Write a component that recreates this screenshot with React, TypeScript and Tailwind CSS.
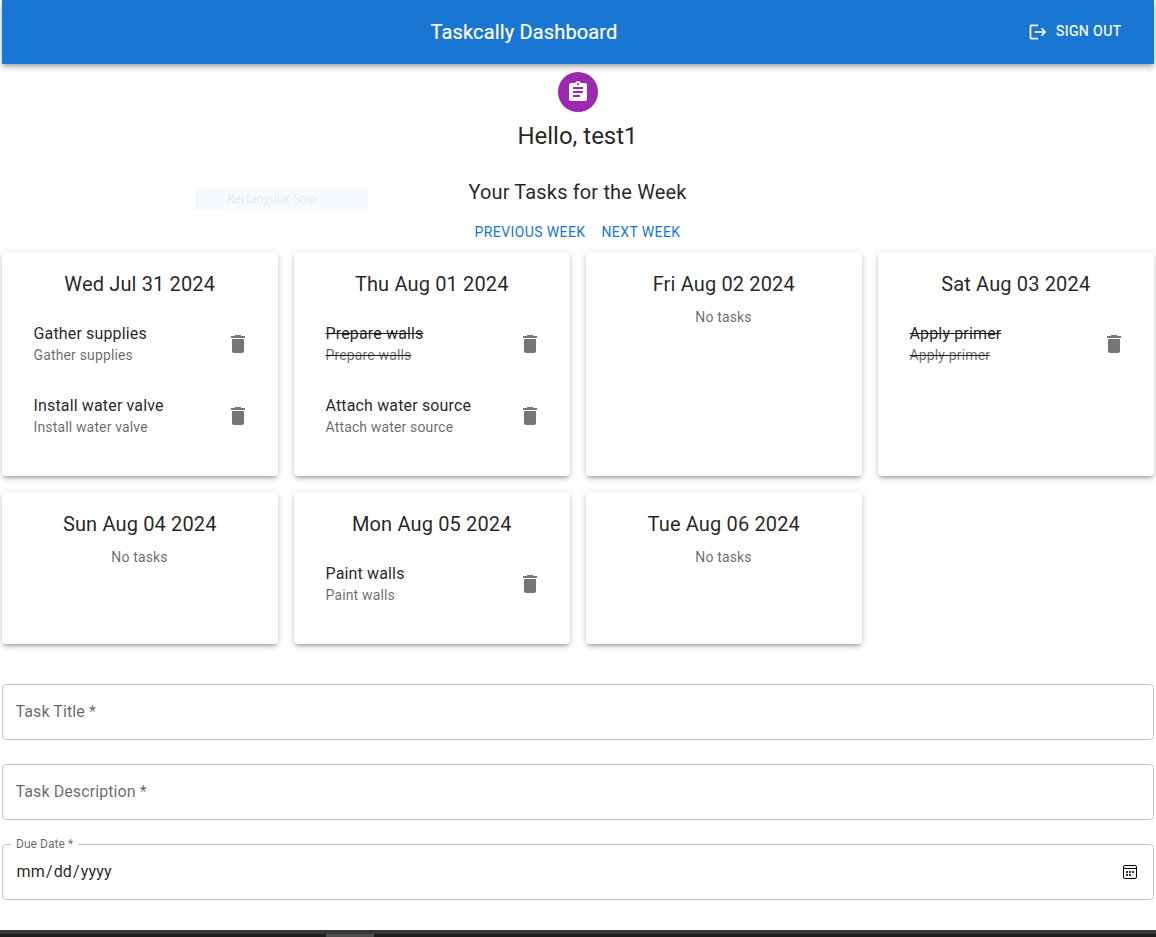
import React from "react";
import { MdAssignment, MdDelete, MdLogout } from "react-icons/md";

type Task = { title: string; description: string; done?: boolean };
type Day = { date: string; tasks: Task[] };

const week: Day[] = [
  {
    date: "Wed Jul 31 2024",
    tasks: [
      { title: "Gather supplies", description: "Gather supplies" },
      { title: "Install water valve", description: "Install water valve" },
    ],
  },
  {
    date: "Thu Aug 01 2024",
    tasks: [
      { title: "Prepare walls", description: "Prepare walls", done: true },
      { title: "Attach water source", description: "Attach water source" },
    ],
  },
  { date: "Fri Aug 02 2024", tasks: [] },
  {
    date: "Sat Aug 03 2024",
    tasks: [{ title: "Apply primer", description: "Apply primer", done: true }],
  },
  { date: "Sun Aug 04 2024", tasks: [] },
  {
    date: "Mon Aug 05 2024",
    tasks: [{ title: "Paint walls", description: "Paint walls" }],
  },
  { date: "Tue Aug 06 2024", tasks: [] },
];

function TaskRow({ task }: { task: Task }) {
  return (
    <li className="flex h-[72px] items-center justify-between pr-3 pl-[15.5px]">
      <div className={task.done ? "line-through" : ""}>
        <span className="block text-base leading-6 tracking-[0.00938em]">{task.title}</span>
        <p className="-mt-px pb-px text-sm leading-5 tracking-[0.01071em] text-black/60">{task.description}</p>
      </div>
      <button aria-label="delete" className="text-[#757575]">
        <MdDelete size={24} />
      </button>
    </li>
  );
}

function DayCard({ day }: { day: Day }) {
  return (
    <section className="rounded-[4px] bg-white p-4 shadow-[0px_3px_3px_-2px_rgba(0,0,0,0.2),0px_3px_4px_0px_rgba(0,0,0,0.14),0px_1px_8px_0px_rgba(0,0,0,0.12)]">
      <h3 className="pr-[0.5px] text-center text-xl leading-8 tracking-[0.0075em]">{day.date}</h3>
      <ul className="py-2">
        {day.tasks.length === 0 && (
          <li className="-mt-px pr-px text-center text-sm leading-5 tracking-[0.01071em] text-black/60">No tasks</li>
        )}
        {day.tasks.map((task) => (
          <TaskRow key={task.title} task={task} />
        ))}
      </ul>
    </section>
  );
}

function TextField({ label }: { label: string }) {
  return (
    <div className="flex h-14 items-center rounded-[4px] border border-[#c4c4c4] px-[12.5px] text-base tracking-[0.006em] text-black/60">
      <span>{label}</span>
    </div>
  );
}

function CalendarIcon() {
  return (
    <svg width="14" height="14" viewBox="0 0 14 14" fill="none" aria-hidden="true">
      <rect x="0.5" y="0.5" width="13" height="13" rx="1.5" stroke="#000" />
      <path d="M1 3.5h12" stroke="#000" />
      <path d="M3 6h2v2H3zM6 6h2v2H6zM9 6h2v2H9zM3 9h2v2H3zM6 9h2v2H6z" fill="#333" />
    </svg>
  );
}

export default function App() {
  return (
    <div className="relative flex h-[937px] flex-col overflow-hidden bg-white font-['Roboto',sans-serif] text-black/87">
      <div className="flex flex-1 flex-col px-0.5">
        <header className="flex h-16 shrink-0 items-center bg-[#1976d2] px-6 text-white shadow-[0px_2px_4px_-1px_rgba(0,0,0,0.2),0px_4px_5px_0px_rgba(0,0,0,0.14),0px_1px_10px_0px_rgba(0,0,0,0.12)]">
          <h1 className="flex-1 pl-0.5 text-center text-xl leading-8 tracking-[0.0075em] [-webkit-text-stroke:0.2px_white]">
            Taskcally Dashboard
          </h1>
          <button className="flex w-[110px] items-center gap-2 pl-2 text-sm leading-6 tracking-[0.02857em] whitespace-nowrap [-webkit-text-stroke:0.2px_white]">
            <MdLogout size={20} />
            <span className="-mt-0.5">SIGN OUT</span>
          </button>
        </header>

        <main className="flex flex-col pt-2">
          <div className="flex flex-col items-center">
            <div className="flex size-10 items-center justify-center rounded-full bg-[#9c27b0] text-white">
              <MdAssignment size={24} />
            </div>
            <h2 className="mt-2 pr-px text-2xl leading-8">Hello, test1</h2>
            <h2 className="mt-6 pr-px text-xl leading-8 tracking-[0.0075em]">Your Tasks for the Week</h2>
            <div className="mt-1.5 flex h-[38px] items-center gap-4 pr-px pb-0.5 text-sm tracking-[0.02857em] text-[#1976d2]">
              <button>PREVIOUS WEEK</button>
              <button>NEXT WEEK</button>
            </div>
          </div>

          <div className="grid grid-cols-4 gap-4">
            {week.map((day) => (
              <DayCard key={day.date} day={day} />
            ))}
          </div>

          <form className="mt-10 flex flex-col gap-6">
            <TextField label="Task Title *" />
            <TextField label="Task Description *" />
            <div className="relative flex h-14 items-center justify-between rounded-[4px] border border-[#c4c4c4] pr-4 pl-[12.5px]">
              <span className="absolute -top-2.5 left-2 bg-white px-[5px] text-xs leading-[18px] tracking-[0.005em] text-black/60">
                Due Date *
              </span>
              <span className="flex text-base tracking-[0.00938em]">
                <span className="px-px">mm</span>/<span className="px-px">dd</span>/
                <span className="px-px">yyyy</span>
              </span>
              <CalendarIcon />
            </div>
          </form>
        </main>
      </div>

      <div className="absolute top-[188px] left-[195px] flex h-[22px] w-[173px] items-center bg-linear-to-r from-[#f4f9ff] from-[28px] to-[#f5fbff] to-[28px] pl-8 font-['Open_Sans',sans-serif] text-xs tracking-[-0.025em] text-[#e9e9eb]">
        Rectangular Snip
      </div>

      <footer className="h-[7px] shrink-0 border-t-4 border-[#363838] bg-[#1b1d1e] pl-[326px]">
        <div className="h-[3px] w-12 bg-[#4b4c4c]" />
      </footer>
    </div>
  );
}
